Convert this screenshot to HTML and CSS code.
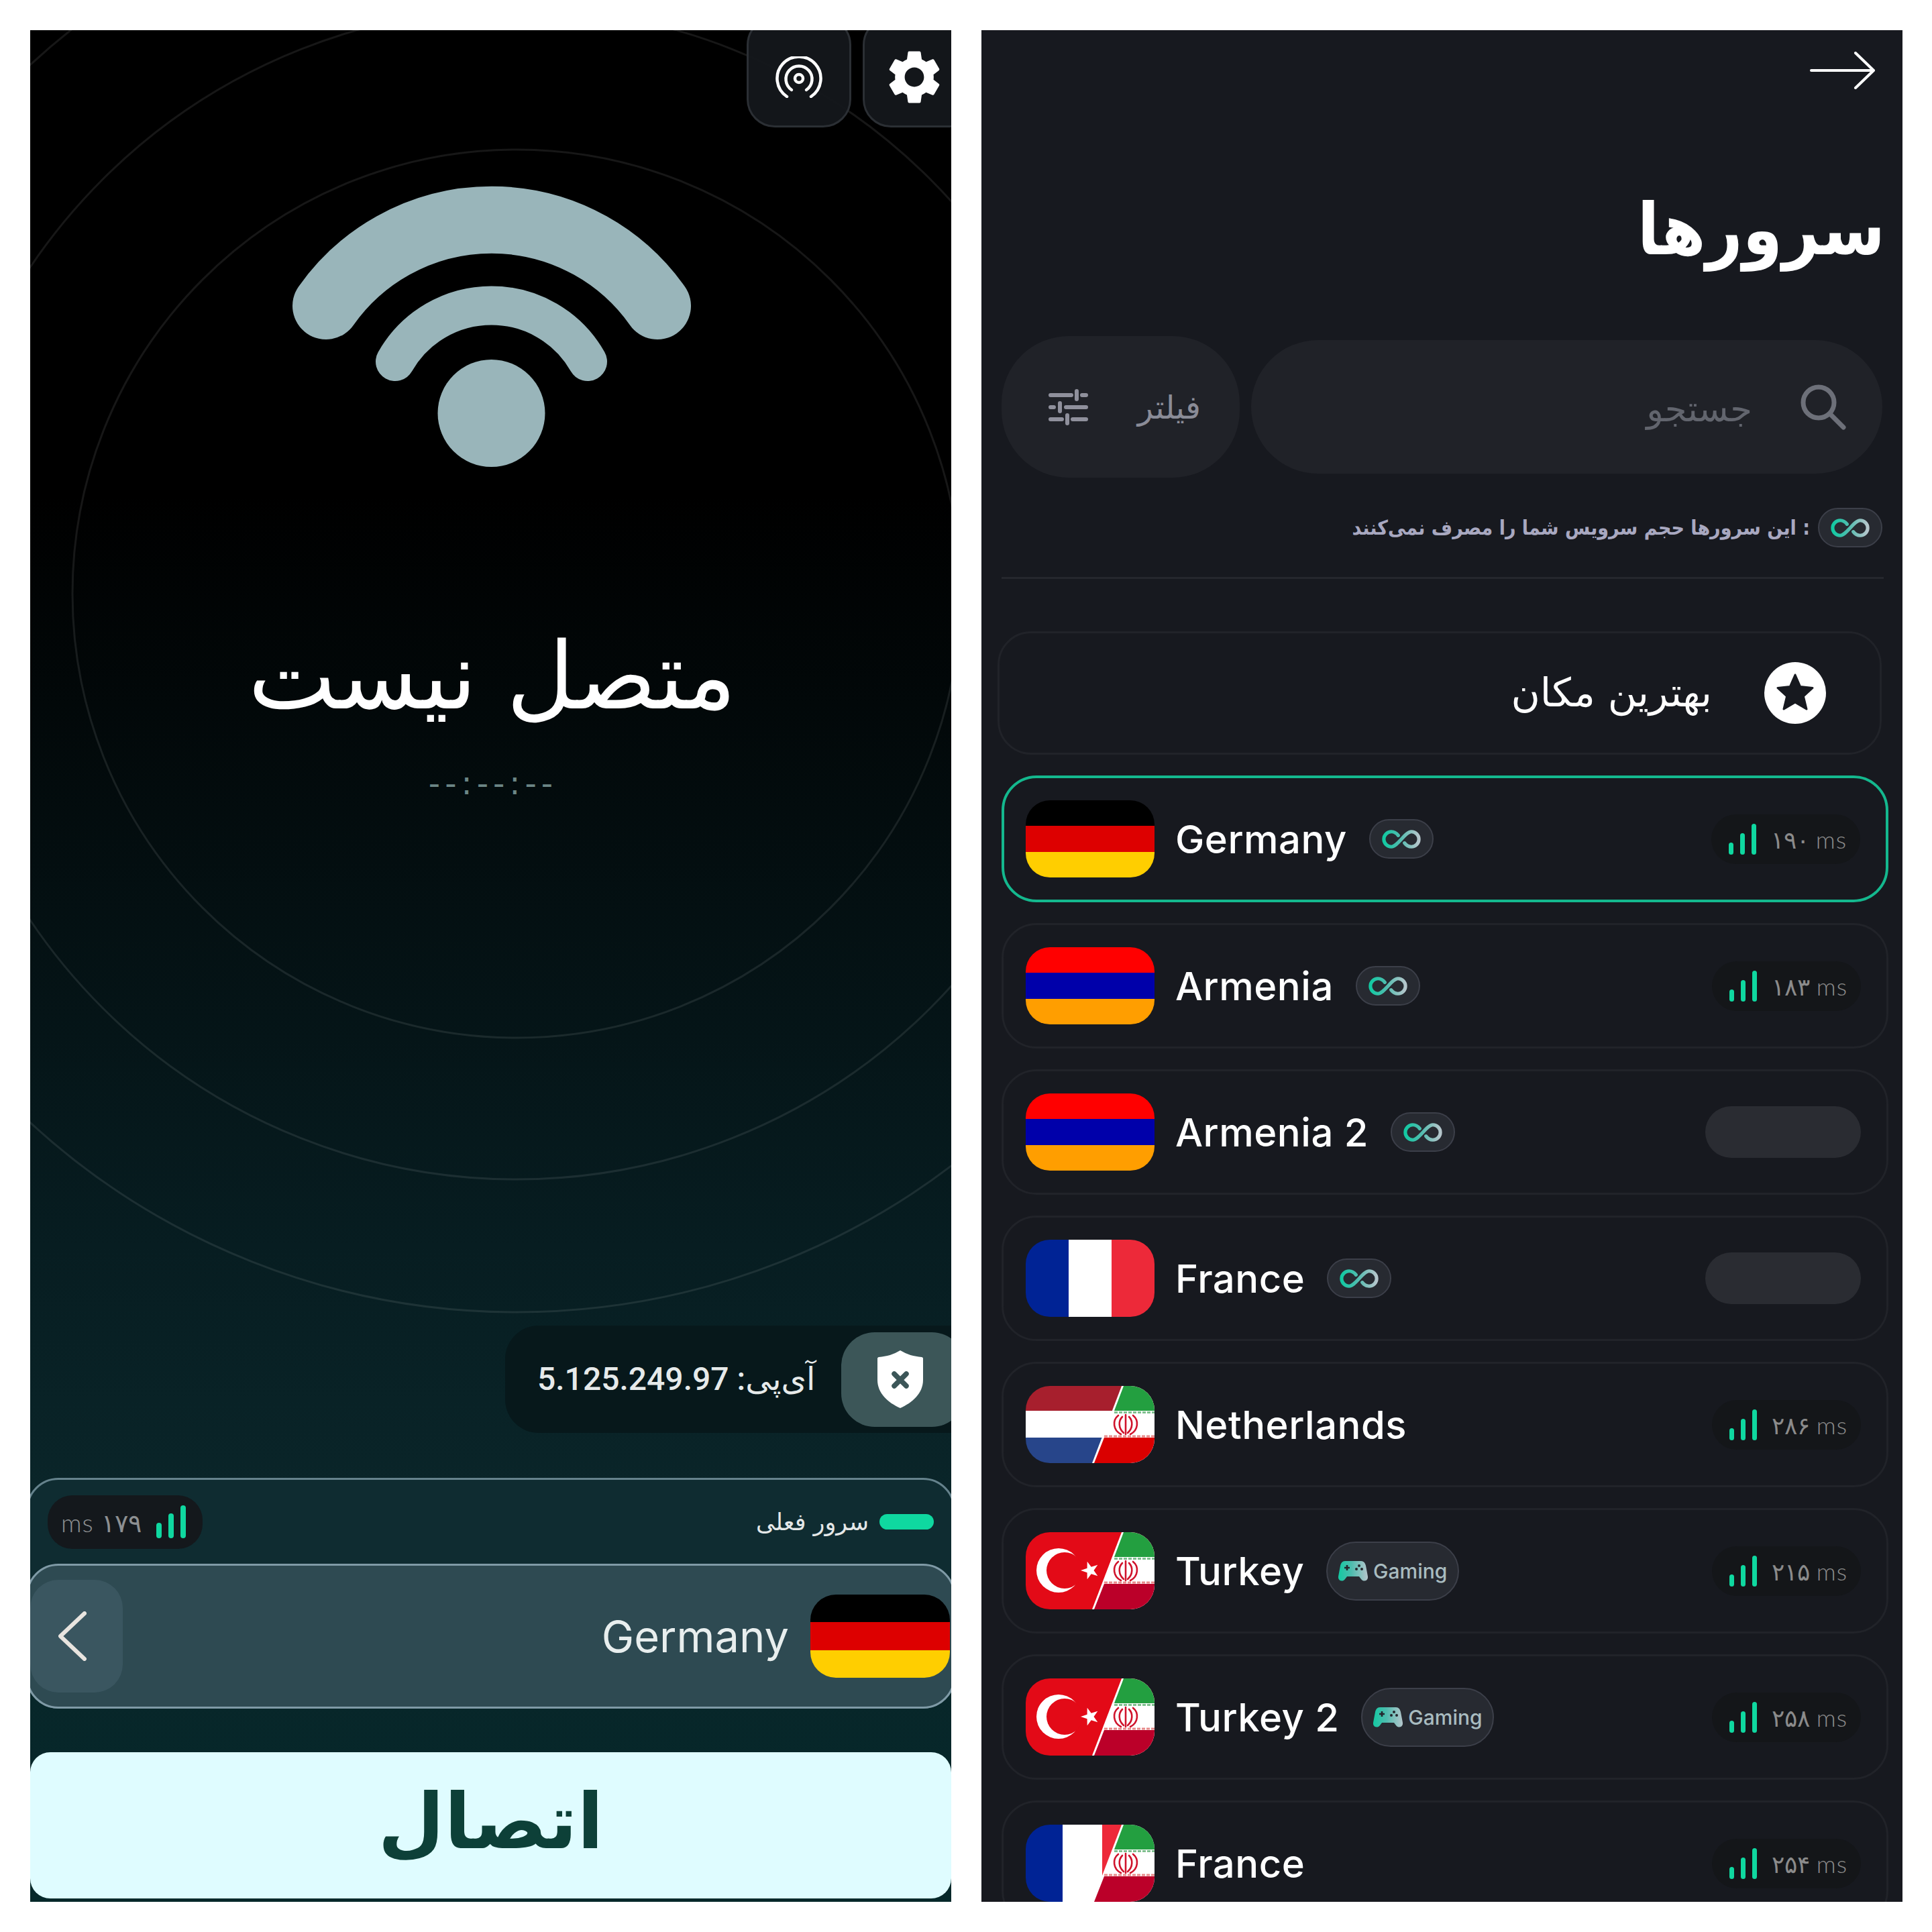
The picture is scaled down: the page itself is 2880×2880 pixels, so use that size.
FILE: index.html
```html
<!DOCTYPE html>
<html lang="fa">
<head>
<meta charset="utf-8">
<title>VPN</title>
<link rel="stylesheet" href="styles.css">
</head>
<body>
<svg class="defs" width="0" height="0" aria-hidden="true">
  <defs>
    <linearGradient id="teal" x1="0" y1="0" x2="1" y2="0">
      <stop offset="0" stop-color="#12c9a2"/>
      <stop offset=".45" stop-color="#4fbcae"/>
      <stop offset="1" stop-color="#b6c6cc"/>
    </linearGradient>
    <symbol id="inf" viewBox="0 0 60 30">
      <path d="M25 9C22 5 18 3 14 3A12 12 0 0 0 14 27C24 27 36 3 46 3A12 12 0 0 1 46 27C42 27 38 25 35 21" fill="none" stroke="url(#teal)" stroke-width="5.5" stroke-linecap="round"/>
    </symbol>
    <symbol id="pad" viewBox="0 0 44 32">
      <path d="M10 1H34C38 1 40 4 41 8L44 24C45 30 38 33 34 28L31 24H13L10 28C6 33-1 30 0 24L3 8C4 4 6 1 10 1Z" fill="url(#teal)"/>
      <path d="M13 7V15M9 11H17" stroke="#24262d" stroke-width="2.6"/>
      <circle cx="31" cy="8" r="2" fill="#24262d"/>
      <circle cx="27" cy="13" r="2" fill="#24262d"/>
      <circle cx="35" cy="13" r="2" fill="#24262d"/>
    </symbol>
    <symbol id="ir" viewBox="0 0 192 115">
      <polygon points="143,0 192,0 192,115 99,115" fill="#fff"/>
      <polygon points="146,0 192,0 192,37 132,37" fill="#239f40"/>
      <polygon points="117,77 192,77 192,115 102,115" fill="var(--ir-red)"/>
      <path d="M132 39.5H192" stroke="#7fc08f" stroke-width="3" stroke-dasharray="5 2"/>
      <path d="M117 75H192" stroke="#e88a8a" stroke-width="3" stroke-dasharray="5 2"/>
      <g fill="none" stroke="#d0142c" stroke-width="2.6" stroke-linecap="round">
        <path d="M149 43V72"/>
        <path d="M144 46C138 52 138 63 146 70"/>
        <path d="M154 46C160 52 160 63 152 70"/>
        <path d="M138 44C129 51 130 66 142 72"/>
        <path d="M160 44C169 51 168 66 156 72"/>
      </g>
    </symbol>
    <symbol id="fl-de" viewBox="0 0 192 115">
      <rect width="192" height="39" fill="#000"/>
      <rect y="38" width="192" height="39" fill="#dd0000"/>
      <rect y="77" width="192" height="38" fill="#ffce00"/>
    </symbol>
    <symbol id="fl-am" viewBox="0 0 192 115">
      <rect width="192" height="39" fill="#ff0000"/>
      <rect y="38" width="192" height="39" fill="#0000aa"/>
      <rect y="77" width="192" height="38" fill="#ff9e00"/>
    </symbol>
    <symbol id="fl-fr" viewBox="0 0 192 115">
      <rect width="65" height="115" fill="#002395"/>
      <rect x="64" width="65" height="115" fill="#fff"/>
      <rect x="128" width="64" height="115" fill="#ed2939"/>
    </symbol>
    <symbol id="fl-nl" viewBox="0 0 192 115">
      <rect width="192" height="38" fill="#a71f2d"/>
      <rect y="37" width="192" height="41" fill="#fff"/>
      <rect y="77" width="192" height="38" fill="#27458a"/>
      <use href="#ir" width="192" height="115" class="ir-bright"/>
    </symbol>
    <symbol id="fl-tr" viewBox="0 0 192 115">
      <rect width="192" height="115" fill="#e30a17"/>
      <circle cx="49" cy="57" r="33" fill="#fff"/>
      <circle cx="58" cy="57" r="27" fill="#e30a17"/>
      <polygon points="82,57 91.6,53.8 91.7,43.7 97.7,51.8 107.3,48.8 101.5,57 107.3,65.2 97.7,62.2 91.7,70.3 91.6,60.2" fill="#fff"/>
      <use href="#ir" width="192" height="115" class="ir-deep"/>
    </symbol>
    <symbol id="fl-fi" viewBox="0 0 192 115">
      <rect width="56" height="115" fill="#002395"/>
      <rect x="55" width="60" height="115" fill="#fff"/>
      <rect x="114" width="40" height="115" fill="#ed2939"/>
      <use href="#ir" width="192" height="115" class="ir-deep"/>
    </symbol>
  </defs>
</svg>

<main class="page">
  <section class="panel home">
    <svg class="rings" viewBox="0 0 1373 2790" aria-hidden="true">
      <circle cx="725" cy="840" r="662"/>
      <circle cx="725" cy="840" r="873"/>
      <circle cx="725" cy="840" r="1071"/>
    </svg>
    <div class="top-actions">
      <button class="tool">
        <svg class="radar" viewBox="0 0 70 62" fill="none" stroke="#fff" stroke-width="4.5" stroke-linecap="round">
          <circle cx="35" cy="33" r="6"/>
          <path d="M24 50A19.5 19.5 0 1 1 46 50"/>
          <path d="M17 60A32.5 32.5 0 1 1 53 60"/>
        </svg>
      </button>
      <button class="tool tool-gear">
        <svg class="gear" viewBox="2.5 2 19 20" fill="#fff"><path d="M19.14 12.94c.04-.3.06-.61.06-.94 0-.32-.02-.64-.07-.94l2.03-1.58a.49.49 0 0 0 .12-.61l-1.92-3.32a.488.488 0 0 0-.59-.22l-2.39.96c-.5-.38-1.03-.7-1.62-.94l-.36-2.54a.484.484 0 0 0-.48-.41h-3.84c-.24 0-.43.17-.47.41l-.36 2.54c-.59.24-1.13.57-1.62.94l-2.39-.96c-.22-.08-.47 0-.59.22L2.74 8.87c-.12.21-.08.47.12.61l2.03 1.58c-.05.3-.09.63-.09.94s.02.64.07.94l-2.03 1.58a.49.49 0 0 0-.12.61l1.92 3.32c.12.22.37.29.59.22l2.39-.96c.5.38 1.03.7 1.62.94l.36 2.54c.05.24.24.41.48.41h3.84c.24 0 .44-.17.47-.41l.36-2.54c.59-.24 1.13-.56 1.62-.94l2.39.96c.22.08.47 0 .59-.22l1.92-3.32c.12-.22.07-.47-.12-.61l-2.01-1.58zM12 15.6c-1.98 0-3.6-1.62-3.6-3.6s1.62-3.6 3.6-3.6 3.6 1.62 3.6 3.6-1.62 3.6-3.6 3.6z"/></svg>
      </button>
    </div>
    <svg class="wifi" viewBox="434 277 596 420" fill="none" stroke="#99b5ba" stroke-linecap="round">
      <path d="M486 456A302 302 0 0 1 980 456" stroke-width="100"/>
      <path d="M589 539A165 165 0 0 1 876 539" stroke-width="58"/>
      <circle cx="732.5" cy="616" r="80" fill="#99b5ba" stroke="none"/>
    </svg>
    <h1 class="status" dir="rtl">متصل نیست</h1>
    <div class="timer">--:--:--</div>
    <div class="ip-pill">
      <span class="ip-text" dir="rtl">آی‌پی: 5.125.249.97</span>
      <span class="shield-box">
        <svg class="shield" viewBox="0 0 68 86">
          <path d="M34 0C44 6 54 9 66 10C67 10 68 11 68 12V44C68 64 52 78 34 86C16 78 0 64 0 44V12C0 11 1 10 2 10C14 9 24 6 34 0Z" fill="#fff"/>
          <path d="M25 35L43 53M43 35L25 53" stroke="#3c5658" stroke-width="7.5" stroke-linecap="round"/>
        </svg>
      </span>
    </div>
    <div class="current">
      <div class="current-head">
        <div class="ping ping-home">
          <span class="ping-text" dir="ltr">ms ۱۷۹</span>
          <span class="bars bars-lg"><i class="b1"></i><i class="b2"></i><i class="b3"></i></span>
        </div>
        <div class="current-label">
          <span class="label-text" dir="rtl">سرور فعلی</span>
          <span class="led"></span>
        </div>
      </div>
      <div class="current-server">
        <span class="back">
          <svg class="chevron" viewBox="0 0 42 74" fill="none" stroke="#e8e4df" stroke-width="6" stroke-linecap="round" stroke-linejoin="round"><path d="M39 3L3 37L39 71"/></svg>
        </span>
        <span class="current-name">Germany</span>
        <svg class="flag flag-home" viewBox="0 0 192 115" preserveAspectRatio="none"><use href="#fl-de"/></svg>
      </div>
    </div>
    <button class="connect" dir="rtl">اتصال</button>
  </section>

  <section class="panel servers">
    <div class="back-row">
      <svg class="arrow" viewBox="0 0 97 56" fill="none" stroke="#fff" stroke-width="4" stroke-linecap="round" stroke-linejoin="round"><path d="M2 28H95M68 2L95 28L68 54"/></svg>
    </div>
    <h2 class="title" dir="rtl">سرورها</h2>
    <div class="search-row">
      <div class="filter">
        <svg class="sliders" viewBox="0 0 59 54" fill="none" stroke="#8f909c" stroke-width="6" stroke-linecap="round">
          <path d="M3 9H34M50 9H56M42 3V15"/>
          <path d="M3 27H8M26 27H56M17 21V33"/>
          <path d="M3 45H20M36 45H56M28 39V51"/>
        </svg>
        <span class="filter-text" dir="rtl">فیلتر</span>
      </div>
      <div class="search">
        <span class="search-text" dir="rtl">جستجو</span>
        <svg class="magnifier" viewBox="0 0 68 68" fill="none" stroke="#6d7079" stroke-width="7" stroke-linecap="round"><circle cx="27" cy="27" r="23"/><path d="M44 44L64 64"/></svg>
      </div>
    </div>
    <div class="info-row">
      <span class="info-text" dir="rtl">: این سرورها حجم سرویس شما را مصرف نمی‌کنند</span>
      <span class="badge badge-inf"><svg class="inf"><use href="#inf"/></svg></span>
    </div>
    <hr class="divider">
    <div class="best">
      <span class="best-text" dir="rtl">بهترین مکان</span>
      <svg class="star" viewBox="0 0 92 92"><circle cx="46" cy="46" r="46" fill="#fff"/><polygon points="46,19 53.6,36.5 72,38.5 58.4,51 63,70 46,60 29,70 33.6,51 20,38.5 38.4,36.5" fill="#17191f" stroke="#17191f" stroke-width="3" stroke-linejoin="round"/></svg>
    </div>
    <ul class="list">
      <li class="row active">
        <svg class="flag"><use href="#fl-de"/></svg>
        <span class="name">Germany</span>
        <span class="badge badge-inf"><svg class="inf"><use href="#inf"/></svg></span>
        <span class="ping"><span class="bars"><i class="b1"></i><i class="b2"></i><i class="b3"></i></span><span class="ping-text" dir="ltr">۱۹۰ ms</span></span>
      </li>
      <li class="row">
        <svg class="flag"><use href="#fl-am"/></svg>
        <span class="name">Armenia</span>
        <span class="badge badge-inf"><svg class="inf"><use href="#inf"/></svg></span>
        <span class="ping"><span class="bars"><i class="b1"></i><i class="b2"></i><i class="b3"></i></span><span class="ping-text" dir="ltr">۱۸۳ ms</span></span>
      </li>
      <li class="row">
        <svg class="flag"><use href="#fl-am"/></svg>
        <span class="name">Armenia 2</span>
        <span class="badge badge-inf"><svg class="inf"><use href="#inf"/></svg></span>
        <span class="ping-empty"></span>
      </li>
      <li class="row">
        <svg class="flag"><use href="#fl-fr"/></svg>
        <span class="name">France</span>
        <span class="badge badge-inf"><svg class="inf"><use href="#inf"/></svg></span>
        <span class="ping-empty"></span>
      </li>
      <li class="row">
        <svg class="flag"><use href="#fl-nl"/></svg>
        <span class="name">Netherlands</span>
        <span class="ping"><span class="bars"><i class="b1"></i><i class="b2"></i><i class="b3"></i></span><span class="ping-text" dir="ltr">۲۸۶ ms</span></span>
      </li>
      <li class="row">
        <svg class="flag"><use href="#fl-tr"/></svg>
        <span class="name">Turkey</span>
        <span class="badge badge-game"><svg class="pad"><use href="#pad"/></svg>Gaming</span>
        <span class="ping"><span class="bars"><i class="b1"></i><i class="b2"></i><i class="b3"></i></span><span class="ping-text" dir="ltr">۲۱۵ ms</span></span>
      </li>
      <li class="row">
        <svg class="flag"><use href="#fl-tr"/></svg>
        <span class="name">Turkey 2</span>
        <span class="badge badge-game"><svg class="pad"><use href="#pad"/></svg>Gaming</span>
        <span class="ping"><span class="bars"><i class="b1"></i><i class="b2"></i><i class="b3"></i></span><span class="ping-text" dir="ltr">۲۵۸ ms</span></span>
      </li>
      <li class="row">
        <svg class="flag"><use href="#fl-fi"/></svg>
        <span class="name">France</span>
        <span class="ping"><span class="bars"><i class="b1"></i><i class="b2"></i><i class="b3"></i></span><span class="ping-text" dir="ltr">۲۵۴ ms</span></span>
      </li>
    </ul>
  </section>
</main>
</body>
</html>
```
FILE: styles.css
```css
* { box-sizing: border-box; }
html, body { margin: 0; background: #fff; }
body { font-family: "Inter", "DejaVu Sans", sans-serif; color: #fff; }
.defs { position: absolute; }
.ir-bright { --ir-red: #da0000; }
.ir-deep { --ir-red: #bb0029; }

.page {
  width: 2880px;
  height: 2880px;
  padding: 45px;
  display: flex;
  gap: 45px;
}
.panel {
  flex: 0 0 1373px;
  min-width: 0;
  height: 2790px;
  overflow: hidden;
  position: relative;
  display: flex;
  flex-direction: column;
}
.panel > * { flex: none; }

/* Home panel */
.home {
  background: linear-gradient(#000 0, #000 25%, #071d21 65%, #0a2529 78%, #05282a 100%);
  align-items: center;
}
.rings {
  position: absolute;
  inset: 0;
  width: 100%;
  height: 100%;
  fill: none;
  stroke: rgba(255, 255, 255, .09);
  stroke-width: 3;
}
.top-actions {
  position: relative;
  align-self: flex-end;
  display: flex;
  gap: 17px;
  margin: -20px -38px 0 0;
}
.tool {
  width: 156px;
  height: 165px;
  padding: 14px 0 0;
  border: 3px solid #2b2f34;
  border-radius: 42px;
  background: rgba(21, 24, 28, .92);
  display: flex;
  align-items: center;
  justify-content: center;
}
.tool-gear { width: 170px; padding-right: 16px; }
.radar { width: 70px; height: 62px; }
.gear { width: 80px; height: 80px; }
.wifi {
  position: relative;
  width: 596px;
  height: 420px;
  margin-top: 87px;
}
.status {
  position: relative;
  margin: 236px 0 0 4px;
  font: 200 139px/150px "DejaVu Sans", sans-serif;
  white-space: nowrap;
}
.timer {
  margin-top: 61px;
  padding-left: 7px;
  font: 400 48px/46px "DejaVu Sans", sans-serif;
  letter-spacing: 7px;
  color: #6c8686;
}
.ip-pill {
  position: relative;
  margin: auto 0 0 auto;
  width: 665px;
  height: 160px;
  padding-left: 48px;
  border-radius: 50px 0 0 50px;
  background: #07181b;
  display: flex;
  align-items: center;
  justify-content: space-between;
}
.ip-text {
  font: 500 48px/60px "Roboto", "DejaVu Sans", sans-serif;
  letter-spacing: 1.6px;
  color: #e6eaea;
  white-space: nowrap;
}
.shield-box {
  width: 185px;
  height: 141px;
  margin-right: -21px;
  padding-right: 10px;
  border-radius: 50px;
  background: #3c5658;
  display: flex;
  align-items: center;
  justify-content: center;
}
.shield { width: 68px; height: 86px; }
.current {
  position: relative;
  align-self: stretch;
  margin: 67px -6px 0;
  height: 344px;
  border: 3px solid #65828c;
  border-radius: 48px;
  background: #0f2c31;
  display: flex;
  flex-direction: column;
}
.current-head {
  height: 125px;
  padding: 0 29px 0 29px;
  display: flex;
  align-items: center;
  justify-content: space-between;
}
.current-label { display: flex; align-items: center; gap: 16px; }
.label-text { font: 400 35px/44px "DejaVu Sans", sans-serif; color: #e4e8e8; }
.led { width: 81px; height: 23px; border-radius: 12px; background: #0fd8a0; }
.current-server {
  flex: 1;
  margin: 0 -3px -3px;
  padding: 0 3px 0 3px;
  border: 3px solid #7f9aa6;
  border-radius: 48px;
  background: #2e4a52;
  display: flex;
  align-items: center;
}
.back {
  width: 138px;
  height: 168px;
  border-radius: 42px;
  background: #3a5660;
  display: flex;
  align-items: center;
  justify-content: center;
}
.chevron { width: 42px; height: 74px; margin-right: 12px; }
.current-name {
  margin-left: auto;
  font-size: 65px;
  font-weight: 400;
  color: #e8eeee;
}
.flag {
  flex: none;
  width: 192px;
  height: 115px;
  border-radius: 36px;
}
.flag-home {
  width: 208px;
  height: 124px;
  margin: 0 2px 0 32px;
  border-radius: 38px;
}
.connect {
  position: relative;
  align-self: stretch;
  height: 218px;
  margin: 65px 0 5px;
  padding: 0 0 10px;
  border: 0;
  border-radius: 30px;
  background: #dffcff;
  color: #0d4038;
  font: 700 114px/1 "DejaVu Sans", sans-serif;
}

/* Servers panel */
.servers { background: #17191f; padding: 0 21px 0 30px; }
.back-row {
  display: flex;
  justify-content: flex-end;
  padding: 32px 20px 0 0;
}
.arrow { width: 97px; height: 56px; }
.title {
  margin: 140px 5px 0 0;
  height: 161px;
  text-align: right;
  font: 700 106px/140px "DejaVu Sans Condensed", "DejaVu Sans", sans-serif;
  white-space: nowrap;
}
.search-row {
  margin: 67px 9px 0 0;
  height: 211px;
  display: flex;
  align-items: center;
  gap: 17px;
}
.filter {
  flex: none;
  width: 355px;
  height: 211px;
  padding: 0 58px 0 70px;
  border-radius: 100px;
  background: #202228;
  display: flex;
  align-items: center;
  justify-content: space-between;
}
.sliders { width: 59px; height: 54px; }
.filter-text { font: 400 48px/56px "DejaVu Sans", sans-serif; color: #8a8c97; }
.search {
  flex: 1;
  height: 199px;
  padding: 0 54px;
  border-radius: 100px;
  background: #202228;
  display: flex;
  align-items: center;
  justify-content: flex-end;
  gap: 72px;
}
.search-text { font: 400 53px/56px "DejaVu Sans", sans-serif; color: #62656e; padding-top: 6px; }
.magnifier { width: 68px; height: 68px; }
.info-row {
  margin: 45px 9px 0 0;
  height: 59px;
  display: flex;
  align-items: center;
  justify-content: flex-end;
  gap: 12px;
}
.info-text { font: 700 30px/44px "DejaVu Sans Condensed", "DejaVu Sans", sans-serif; color: #a8a8c0; white-space: nowrap; }
.divider {
  width: 1315px;
  height: 3px;
  margin: 44px 0 0;
  border: 0;
  background: #25272d;
}
.best {
  margin: 78px 10px 0 -6px;
  height: 184px;
  padding-right: 80px;
  border: 3px solid #212329;
  border-radius: 50px;
  display: flex;
  align-items: center;
  justify-content: flex-end;
  gap: 78px;
}
.best-text { font: 400 59px/64px "DejaVu Sans", sans-serif; color: #fff; }
.star { width: 92px; height: 92px; }
.list {
  list-style: none;
  margin: 31px 0 0;
  padding: 0;
  display: flex;
  flex-direction: column;
  gap: 31px;
}
.row {
  flex: none;
  height: 187px;
  padding: 0 38px 0 33px;
  border: 3px solid #212329;
  border-radius: 52px;
  display: flex;
  align-items: center;
}
.row.active { height: 189px; border: 4px solid #14b88e; padding: 0 38px 0 32px; }
.name { margin: 0 33px 0 31px; font-size: 58px; font-weight: 500; letter-spacing: .5px; white-space: nowrap; }
.badge {
  flex: none;
  border: 2px solid #3c3f49;
  background: #272a31;
  display: inline-flex;
  align-items: center;
  justify-content: center;
}
.badge-inf { width: 96px; height: 59px; border-radius: 30px; }
.inf { width: 58px; height: 28px; }
.badge-game {
  width: 198px;
  height: 88px;
  gap: 8px;
  border-radius: 44px;
  font-size: 30px;
  font-weight: 500;
  color: #a9bcc0;
}
.pad { width: 44px; height: 32px; }
.ping {
  flex: none;
  margin-left: auto;
  height: 74px;
  padding: 0 20px 0 26px;
  border-radius: 37px;
  background: #141619;
  display: flex;
  align-items: center;
  gap: 22px;
}
.ping.ping-home {
  margin: 0;
  width: 231px;
  height: 80px;
  padding: 0 0 0 20px;
  background: #14181c;
  gap: 22px;
}
.ping-text { font: 300 36px/44px "Lato", "DejaVu Sans", sans-serif; color: #8b8b8b; letter-spacing: 1px; white-space: nowrap; }
.ping-home .ping-text { font-size: 38px; color: #8d9092; }
.ping-empty {
  flex: none;
  margin-left: auto;
  width: 232px;
  height: 77px;
  border-radius: 39px;
  background: #2a2c32;
}
.bars { display: flex; align-items: flex-end; gap: 10px; }
.bars i { display: block; width: 7px; border-radius: 4px; background: #0fd8a0; }
.bars .b1 { height: 18px; }
.bars .b2 { height: 32px; }
.bars .b3 { height: 46px; }
.bars-lg i { width: 8px; }
.bars-lg .b1 { height: 23px; }
.bars-lg .b2 { height: 37px; }
.bars-lg .b3 { height: 49px; }
```
